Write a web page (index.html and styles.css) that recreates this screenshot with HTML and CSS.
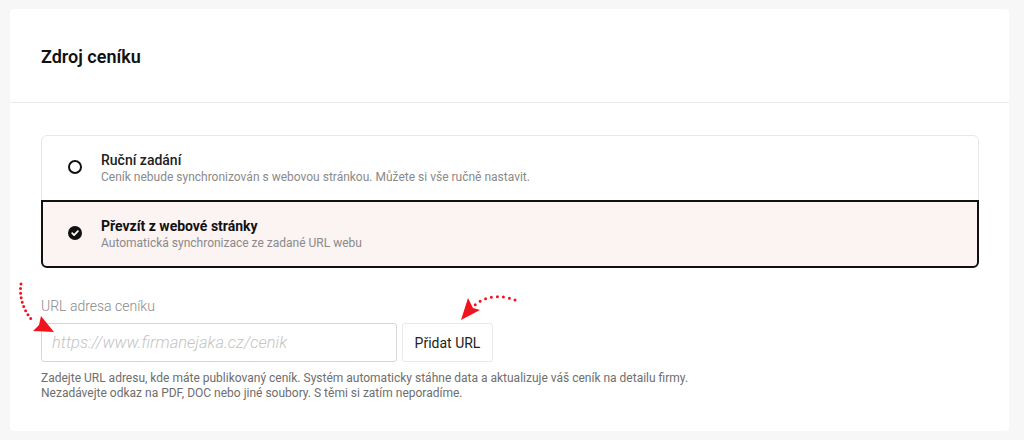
FILE: index.html
```html
<!DOCTYPE html>
<html lang="cs">
<head>
  <meta charset="UTF-8">
  <meta name="viewport" content="width=device-width, initial-scale=1.0">
  <title>Zdroj ceníku</title>
  <link rel="stylesheet" href="styles.css">
</head>
<body>

  <div class="card">
    <div class="card-header">
      <h2>Zdroj ceníku</h2>
    </div>

    <div class="card-body">
      <div class="source-list">
        <label class="source-option">
          <span class="radio"></span>
          <span class="source-text">
            <span class="source-title">Ruční zadání</span>
            <span class="source-desc">Ceník nebude synchronizován s webovou stránkou. Můžete si vše ručně nastavit.</span>
          </span>
        </label>
        <label class="source-option selected">
          <span class="radio checked">
            <svg width="14" height="14" viewBox="0 0 14 14"><path d="M4.2 7.2l1.9 1.9 3.8-3.9" fill="none" stroke="#fff" stroke-width="1.8" stroke-linecap="round" stroke-linejoin="round"/></svg>
          </span>
          <span class="source-text">
            <span class="source-title bold">Převzít z webové stránky</span>
            <span class="source-desc">Automatická synchronizace ze zadané URL webu</span>
          </span>
        </label>
      </div>

      <div class="url-field">
        <div class="url-label">URL adresa ceníku</div>
        <div class="url-row">
          <input type="text" class="url-input" placeholder="https://www.firmanejaka.cz/cenik">
          <button class="url-button">Přidat URL</button>
        </div>
        <p class="url-help">
          Zadejte URL adresu, kde máte publikovaný ceník. Systém automaticky stáhne data a aktualizuje váš ceník na detailu firmy.<br>
          Nezadávejte odkaz na PDF, DOC nebo jiné soubory. S těmi si zatím neporadíme.
        </p>

        <!-- hint arrows -->
        <svg class="hint-arrow hint-left" width="46" height="58" viewBox="0 0 46 58">
          <path d="M9 6 C 7 18, 11 32, 20 42" fill="none" stroke="#f0141e" stroke-width="3" stroke-linecap="round" stroke-dasharray="0 4.6"/>
          <polygon points="29,38 42,54 21,53 27,47" fill="#f0141e"/>
        </svg>
        <svg class="hint-arrow hint-right" width="66" height="40" viewBox="0 0 66 40">
          <path d="M62 13 C 50 8, 32 8, 21 19" fill="none" stroke="#f0141e" stroke-width="3" stroke-linecap="round" stroke-dasharray="0 6"/>
          <polygon points="15,11 20,21 27,23 8,33" fill="#f0141e"/>
        </svg>
      </div>
    </div>
  </div>

</body>
</html>
```

FILE: styles.css
```css
body {
  margin: 0;
  padding: 9px 15px 0 10px;
  background-color: #f7f7f7;
  font-family: Roboto, "Liberation Sans", Arial, sans-serif;
  color: #111;
}

.card {
  background-color: #fff;
  border-radius: 4px;
  height: 422px;
}

.card-header {
  height: 93px;
  padding: 0 31px;
  display: flex;
  align-items: center;
  border-bottom: 1px solid #ebebeb;
}

.card-header h2 {
  margin: 2px 0 0;
  font-size: 18px;
  font-weight: 600;
  color: #111;
}

.card-body {
  padding: 32px 30px 0 31px;
}

.source-list {
  border: 1px solid #e8e8e8;
  border-radius: 6px;
}

.source-option {
  display: flex;
  align-items: center;
  gap: 19px;
  height: 64px;
  padding: 0 26px;
}

.source-option.selected {
  height: 64px;
  margin: 0 -1px -1px;
  padding: 0 25px;
  border: 2px solid #111;
  border-radius: 0 0 6px 6px;
  background-color: #fcf3f3;
}

.radio {
  width: 14px;
  height: 14px;
  box-sizing: border-box;
  border: 2px solid #111;
  border-radius: 50%;
  flex-shrink: 0;
  margin-top: -2px;
}

.radio.checked {
  border: none;
  background-color: #111;
  display: flex;
}

.source-text {
  display: flex;
  flex-direction: column;
}

.source-title {
  font-size: 14px;
  line-height: 18px;
  font-weight: 500;
  color: #222;
}

.source-title.bold {
  font-weight: 700;
  color: #111;
}

.source-desc {
  font-size: 12px;
  line-height: 16px;
  color: #8a8a8a;
}

.url-field {
  position: relative;
  padding-top: 30px;
}

.url-label {
  font-size: 14px;
  line-height: 16px;
  font-weight: 300;
  color: #8a8a8a;
}

.url-row {
  display: flex;
  gap: 5px;
  margin-top: 9px;
}

.url-input {
  width: 356px;
  height: 39px;
  box-sizing: border-box;
  padding: 0 10px;
  border: 1px solid #d6d6d6;
  border-radius: 3px;
  font-family: Roboto, "Liberation Sans", Arial, sans-serif;
  font-size: 16.5px;
  color: #111;
}

.url-input::placeholder {
  color: #c4c4c4;
  font-style: italic;
  font-weight: 300;
}

.url-button {
  width: 91px;
  height: 39px;
  background-color: #fff;
  border: 1px solid #e8e8e8;
  border-radius: 3px;
  font-family: Roboto, "Liberation Sans", Arial, sans-serif;
  font-size: 14px;
  color: #222;
  cursor: pointer;
}

.url-help {
  margin: 9px 0 0;
  font-size: 12px;
  line-height: 15px;
  color: #6e6e6e;
}

.hint-arrow {
  position: absolute;
}

.hint-left {
  left: -29px;
  top: 10px;
}

.hint-right {
  left: 412px;
  top: 19px;
}
```
